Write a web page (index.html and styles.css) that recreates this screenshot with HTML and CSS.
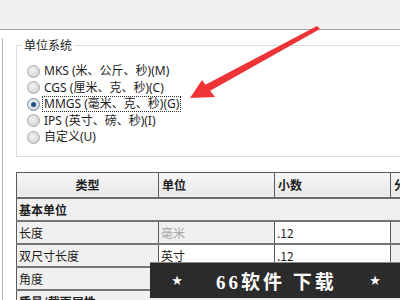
FILE: index.html
```html
<!DOCTYPE html>
<html lang="zh">
<head>
    <meta charset="UTF-8">
    <title>单位</title>
    <link rel="stylesheet" href="styles.css">
</head>
<body>
    <div class="topbar"></div>
    <div class="panel">
        <fieldset class="units">
            <legend>单位系统</legend>
            <div class="opt"><span class="radio"></span><span class="lbl">MKS (米、公斤、秒)(M)</span></div>
            <div class="opt"><span class="radio"></span><span class="lbl">CGS (厘米、克、秒)(C)</span></div>
            <div class="opt"><span class="radio on"></span><span class="lbl focus">MMGS (毫米、克、秒)(G)</span></div>
            <div class="opt"><span class="radio"></span><span class="lbl">IPS (英寸、磅、秒)(I)</span></div>
            <div class="opt"><span class="radio"></span><span class="lbl">自定义(U)</span></div>
        </fieldset>

        <table class="grid">
            <colgroup>
                <col class="c1"><col class="c2"><col class="c3"><col class="c4">
            </colgroup>
            <thead>
                <tr>
                    <th class="center">类型</th>
                    <th>单位</th>
                    <th>小数</th>
                    <th>分数</th>
                </tr>
            </thead>
            <tbody>
                <tr class="section"><td colspan="4">基本单位</td></tr>
                <tr>
                    <td>长度</td>
                    <td class="dim">毫米</td>
                    <td class="edit">.12</td>
                    <td></td>
                </tr>
                <tr>
                    <td>双尺寸长度</td>
                    <td class="edit">英寸</td>
                    <td class="edit">.12</td>
                    <td></td>
                </tr>
                <tr>
                    <td>角度</td>
                    <td class="edit">度</td>
                    <td class="edit">.12</td>
                    <td></td>
                </tr>
                <tr class="section"><td colspan="4">质量/截面属性</td></tr>
            </tbody>
        </table>
    </div>

    <svg class="arrow" width="400" height="300" viewBox="0 0 400 300">
        <polygon points="317,26 320,29 208,92 203,86" fill="#ee3436"/>
        <polygon points="190,98 202,80 215,97" fill="#ee3436"/>
    </svg>

    <div class="banner">
        <span class="star">★</span>
        <span class="brand">66软件 下载</span>
        <span class="star">★</span>
    </div>
</body>
</html>
```

FILE: styles.css
```css
body{
    margin: 0;
    width: 400px;
    height: 300px;
    overflow: hidden;
    background: #fff;
    font-family: "Noto Sans", "Noto Sans CJK SC", sans-serif;
    font-size: 12px;
    color: #1e1e1e;
}
.topbar{
    height: 29px;
    background: #f0f0f0;
    border-bottom: 1px solid #a0a0a0;
}
.panel{
    margin: 8px 0 0 2px;
    border-left: 1px solid #b4b4b4;
    height: 300px;
}
.units{
    margin: 7px 0 0 13px;
    width: 420px;
    padding: 11px 0 10px 5px;
    border: 1px solid #dcdcdc;
}
.units legend{
    padding: 0 2px;
    line-height: 14px;
    font-family: "Noto Sans CJK SC", sans-serif;
}
.opt{
    display: flex;
    align-items: center;
    height: 16.5px;
    white-space: nowrap;
}
.radio{
    width: 11px;
    height: 11px;
    margin: 0 4px 0 5px;
    border-radius: 50%;
    border: 1px solid #a8a8a8;
    background: radial-gradient(circle at 40% 40%, #f4f4f4, #c8c8c8);
    position: relative;
}
.radio.on{
    border-color: #6f8fae;
}
.radio.on::after{
    content: "";
    position: absolute;
    left: 3px;
    top: 3px;
    width: 5px;
    height: 5px;
    border-radius: 50%;
    background: #1d4f85;
}
.lbl{
    padding: 0 1px;
    line-height: 14px;
    border: 1px solid transparent;
    margin-left: -2px;
}
.focus{
    border: 1px dotted #333;
}
.grid{
    margin: 15px 0 0 13px;
    border-collapse: collapse;
    table-layout: fixed;
    width: 474px;
    border: 1px solid #5a5a5a;
    font-family: "Noto Sans CJK SC", sans-serif;
}
.c1{ width: 142px; }
.c2{ width: 116px; }
.c3{ width: 116px; }
.c4{ width: 100px; }
.grid th{
    height: 24px;
    padding: 0 3px;
    text-align: left;
    font-weight: bold;
    background: linear-gradient(#f7f7f7, #e8e8e8);
    border: 1px solid #5a5a5a;
    border-bottom: 2px solid #6a6a6a;
}
.grid th.center{
    text-align: center;
}
.grid td{
    height: 21px;
    padding: 0 2px;
    background: #f0f0f0;
    border-right: 1px solid #5a5a5a;
    border-bottom: 2px solid #747474;
    white-space: nowrap;
}
.grid .section td{
    font-weight: bold;
}
.grid td.edit{
    background: #fff;
}
.grid td.dim{
    color: #a8a8a8;
}
.arrow{
    position: absolute;
    left: 0;
    top: 0;
    pointer-events: none;
}
.banner{
    position: absolute;
    left: 150px;
    top: 262px;
    width: 250px;
    height: 35px;
    background: #2b2b2b;
    border-top: 1px solid #8a8a8a;
    display: flex;
    align-items: center;
    color: #fff;
}
.star{
    font-family: "DejaVu Sans", sans-serif;
    font-size: 13px;
    width: 18px;
    text-align: center;
}
.banner .star:first-child{
    margin-left: 18px;
}
.brand{
    margin-left: 30px;
    width: 150px;
    font-family: "Liberation Serif", "Noto Sans CJK SC", serif;
    font-weight: bold;
    font-size: 19px;
    letter-spacing: 3px;
}
```
